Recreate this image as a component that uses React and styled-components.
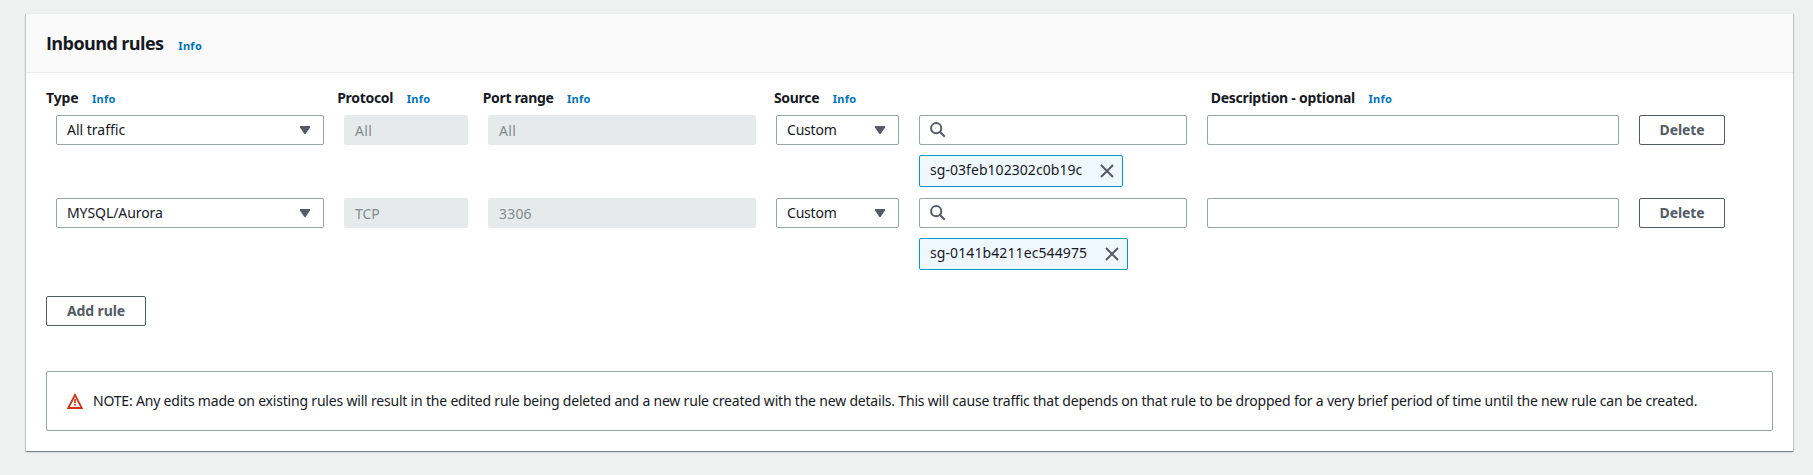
import React from "react";
import styled, { createGlobalStyle } from "styled-components";

const GlobalStyle = createGlobalStyle`
  *, *::before, *::after { box-sizing: border-box; }
  body {
    margin: 0;
    background: #eff1f1;
    color: #16191f;
    font-family: "Noto Sans", "Open Sans", sans-serif;
    font-size: 14px;
    line-height: 22px;
  }
  button, input { font: inherit; }
`;

const Page = styled.main`
  padding: 13px 20px 24px 26px;
`;

const Card = styled.section`
  width: 1767px;
  background: #fff;
  border-top: 1px solid #eaeded;
  box-shadow: 0 1px 1px 0 rgba(0, 28, 36, 0.3), 1px 1px 1px 0 rgba(0, 28, 36, 0.15),
    -1px 1px 1px 0 rgba(0, 28, 36, 0.15);
`;

const CardHeader = styled.header`
  display: flex;
  align-items: center;
  height: 59px;
  padding: 2px 20px 0;
  background: #fafafa;
  border-bottom: 1px solid #eaeded;
`;

const TitleLine = styled.div`
  display: flex;
  align-items: baseline;
  gap: 15px;
`;

const Title = styled.h2`
  margin: 0;
  font-family: "Open Sans", sans-serif;
  font-size: 18px;
  font-weight: 700;
  letter-spacing: -0.6px;
`;

const InfoLink = styled.a`
  color: #0073bb;
  font-size: 11px;
  font-weight: 700;
  letter-spacing: 0.3px;
  text-decoration: none;
  cursor: pointer;
`;

const CardBody = styled.div`
  padding: 14px 20px 20px;
`;

const Labels = styled.div`
  display: grid;
  grid-template-columns: 2fr 1fr 2fr 3fr 4fr;
  width: 1747px;
  height: 22px;
  margin-bottom: 6px;
`;

const Label = styled.div`
  display: flex;
  align-items: baseline;
  gap: 13.5px;
  font-weight: 700;
  letter-spacing: ${({ $track }) => $track}px;
`;

const Rules = styled.div`
  display: grid;
  gap: 11px;
  padding-left: 10px;
`;

const RuleRow = styled.div`
  display: grid;
  grid-template-columns: 268px 124px 268px 123px 268px 412px 86px;
  column-gap: 20px;
  align-items: start;
`;

const Select = styled.div`
  display: flex;
  align-items: center;
  justify-content: space-between;
  height: 30px;
  padding: 0 13px 0 10px;
  border: 1px solid #95a5a6;
  border-radius: 2px;
  background: #fff;
  letter-spacing: ${({ $track = 0 }) => $track}px;
`;

const Caret = styled.svg`
  display: block;
  width: 10px;
  height: 8px;
  fill: #545b64;
`;

const DisabledField = styled.div`
  height: 30px;
  padding: 5px 11px 0;
  border-radius: 2px;
  background: #e6eaea;
  color: #7f8c8d;
  letter-spacing: ${({ $track = 0 }) => $track}px;
`;

const Source = styled.div`
  display: flex;
  flex-direction: column;
  align-items: flex-start;
  gap: 10px;
`;

const SearchBox = styled.label`
  display: flex;
  align-items: center;
  gap: 8px;
  width: 100%;
  height: 30px;
  padding: 0 10px;
  border: 1px solid #95a5a6;
  border-radius: 2px;
  background: #fff;
`;

const SearchInput = styled.input`
  flex: 1;
  min-width: 0;
  padding: 0;
  border: 0;
  outline: 0;
  background: transparent;
`;

const DescriptionInput = styled.input`
  width: 100%;
  height: 30px;
  padding: 0 10px;
  border: 1px solid #95a5a6;
  border-radius: 2px;
  outline: 0;
  background: #fff;
`;

const Token = styled.div`
  display: flex;
  align-items: center;
  justify-content: space-between;
  width: ${({ $width }) => $width}px;
  height: 32px;
  padding: 0 7px 0 10px;
  border: 1px solid #0099cc;
  border-radius: 2px;
  background: #f0f8ff;
  letter-spacing: ${({ $track }) => $track}px;
`;

const TokenText = styled.span`
  padding-bottom: 2px;
`;

const Icon = styled.svg`
  display: block;
  flex: none;
  width: 16px;
  height: 16px;
  fill: none;
  stroke: ${({ $color = "#545b64" }) => $color};
  stroke-width: 2;
`;

const Button = styled.button`
  display: flex;
  align-items: center;
  justify-content: center;
  width: ${({ $width }) => $width}px;
  height: 30px;
  padding: 0;
  border: 1px solid #545b64;
  border-radius: 2px;
  background: #fff;
  color: #545b64;
  font-weight: 700;
  letter-spacing: -0.09px;
`;

const Actions = styled.div`
  margin: 26px 0 45px;
`;

const Alert = styled.div`
  display: flex;
  align-items: center;
  gap: 10px;
  height: 60px;
  padding: 0 20px;
  border: 1px solid #95a5a6;
  border-radius: 2px;
  letter-spacing: -0.196px;
  white-space: nowrap;
`;

const labels = [
  { text: "Type", track: -0.15 },
  { text: "Protocol", track: -0.3 },
  { text: "Port range", track: -0.34 },
  { text: "Source", track: -0.3 },
  { text: "Description - optional", track: -0.27 },
];

const rules = [
  {
    type: "All traffic", typeTrack: 0,
    protocol: "All", protocolTrack: 0.35,
    port: "All", portTrack: 0.35,
    token: "sg-03feb102302c0b19c", tokenTrack: 0.05, tokenWidth: 204,
  },
  {
    type: "MYSQL/Aurora", typeTrack: -0.08,
    protocol: "TCP", protocolTrack: 0,
    port: "3306", portTrack: 0.2,
    token: "sg-0141b4211ec544975", tokenTrack: 0.1, tokenWidth: 209,
  },
];

function SelectBox({ children, track }) {
  return (
    <Select $track={track}>
      {children}
      <Caret viewBox="0 0 10 8">
        <path d="M0 0h10v1.4L5.6 8H4.4L0 1.4z" />
      </Caret>
    </Select>
  );
}

function Rule({ rule }) {
  return (
    <RuleRow>
      <SelectBox track={rule.typeTrack}>{rule.type}</SelectBox>
      <DisabledField $track={rule.protocolTrack}>{rule.protocol}</DisabledField>
      <DisabledField $track={rule.portTrack}>{rule.port}</DisabledField>
      <SelectBox track={-0.2}>Custom</SelectBox>
      <Source>
        <SearchBox>
          <Icon viewBox="0 0 16 16">
            <circle cx="6.2" cy="6.2" r="5.1" />
            <path d="M9.8 9.8l5 5" />
          </Icon>
          <SearchInput aria-label="Source" />
        </SearchBox>
        <Token $width={rule.tokenWidth} $track={rule.tokenTrack}>
          <TokenText>{rule.token}</TokenText>
          <Icon viewBox="0 0 16 16">
            <path d="M2 2l12 12M14 2L2 14" />
          </Icon>
        </Token>
      </Source>
      <DescriptionInput aria-label="Description" />
      <Button $width={86}>Delete</Button>
    </RuleRow>
  );
}

export default function App() {
  return (
    <>
      <GlobalStyle />
      <Page>
        <Card>
          <CardHeader>
            <TitleLine>
              <Title>Inbound rules</Title>
              <InfoLink>Info</InfoLink>
            </TitleLine>
          </CardHeader>
          <CardBody>
            <Labels>
              {labels.map(({ text, track }) => (
                <Label key={text} $track={track}>
                  {text}
                  <InfoLink>Info</InfoLink>
                </Label>
              ))}
            </Labels>
            <Rules>
              {rules.map((rule) => (
                <Rule key={rule.token} rule={rule} />
              ))}
            </Rules>
            <Actions>
              <Button $width={100}>Add rule</Button>
            </Actions>
            <Alert>
              <Icon viewBox="0 0 16 16" $color="#d13212">
                <path d="M8 1.8L14.7 15H1.3z" strokeWidth="1.8" />
                <path d="M8 6v4M8 11v1.7" strokeWidth="1.6" />
              </Icon>
              NOTE: Any edits made on existing rules will result in the edited rule being deleted and a new rule created
              with the new details. This will cause traffic that depends on that rule to be dropped for a very brief
              period of time until the new rule can be created.
            </Alert>
          </CardBody>
        </Card>
      </Page>
    </>
  );
}
